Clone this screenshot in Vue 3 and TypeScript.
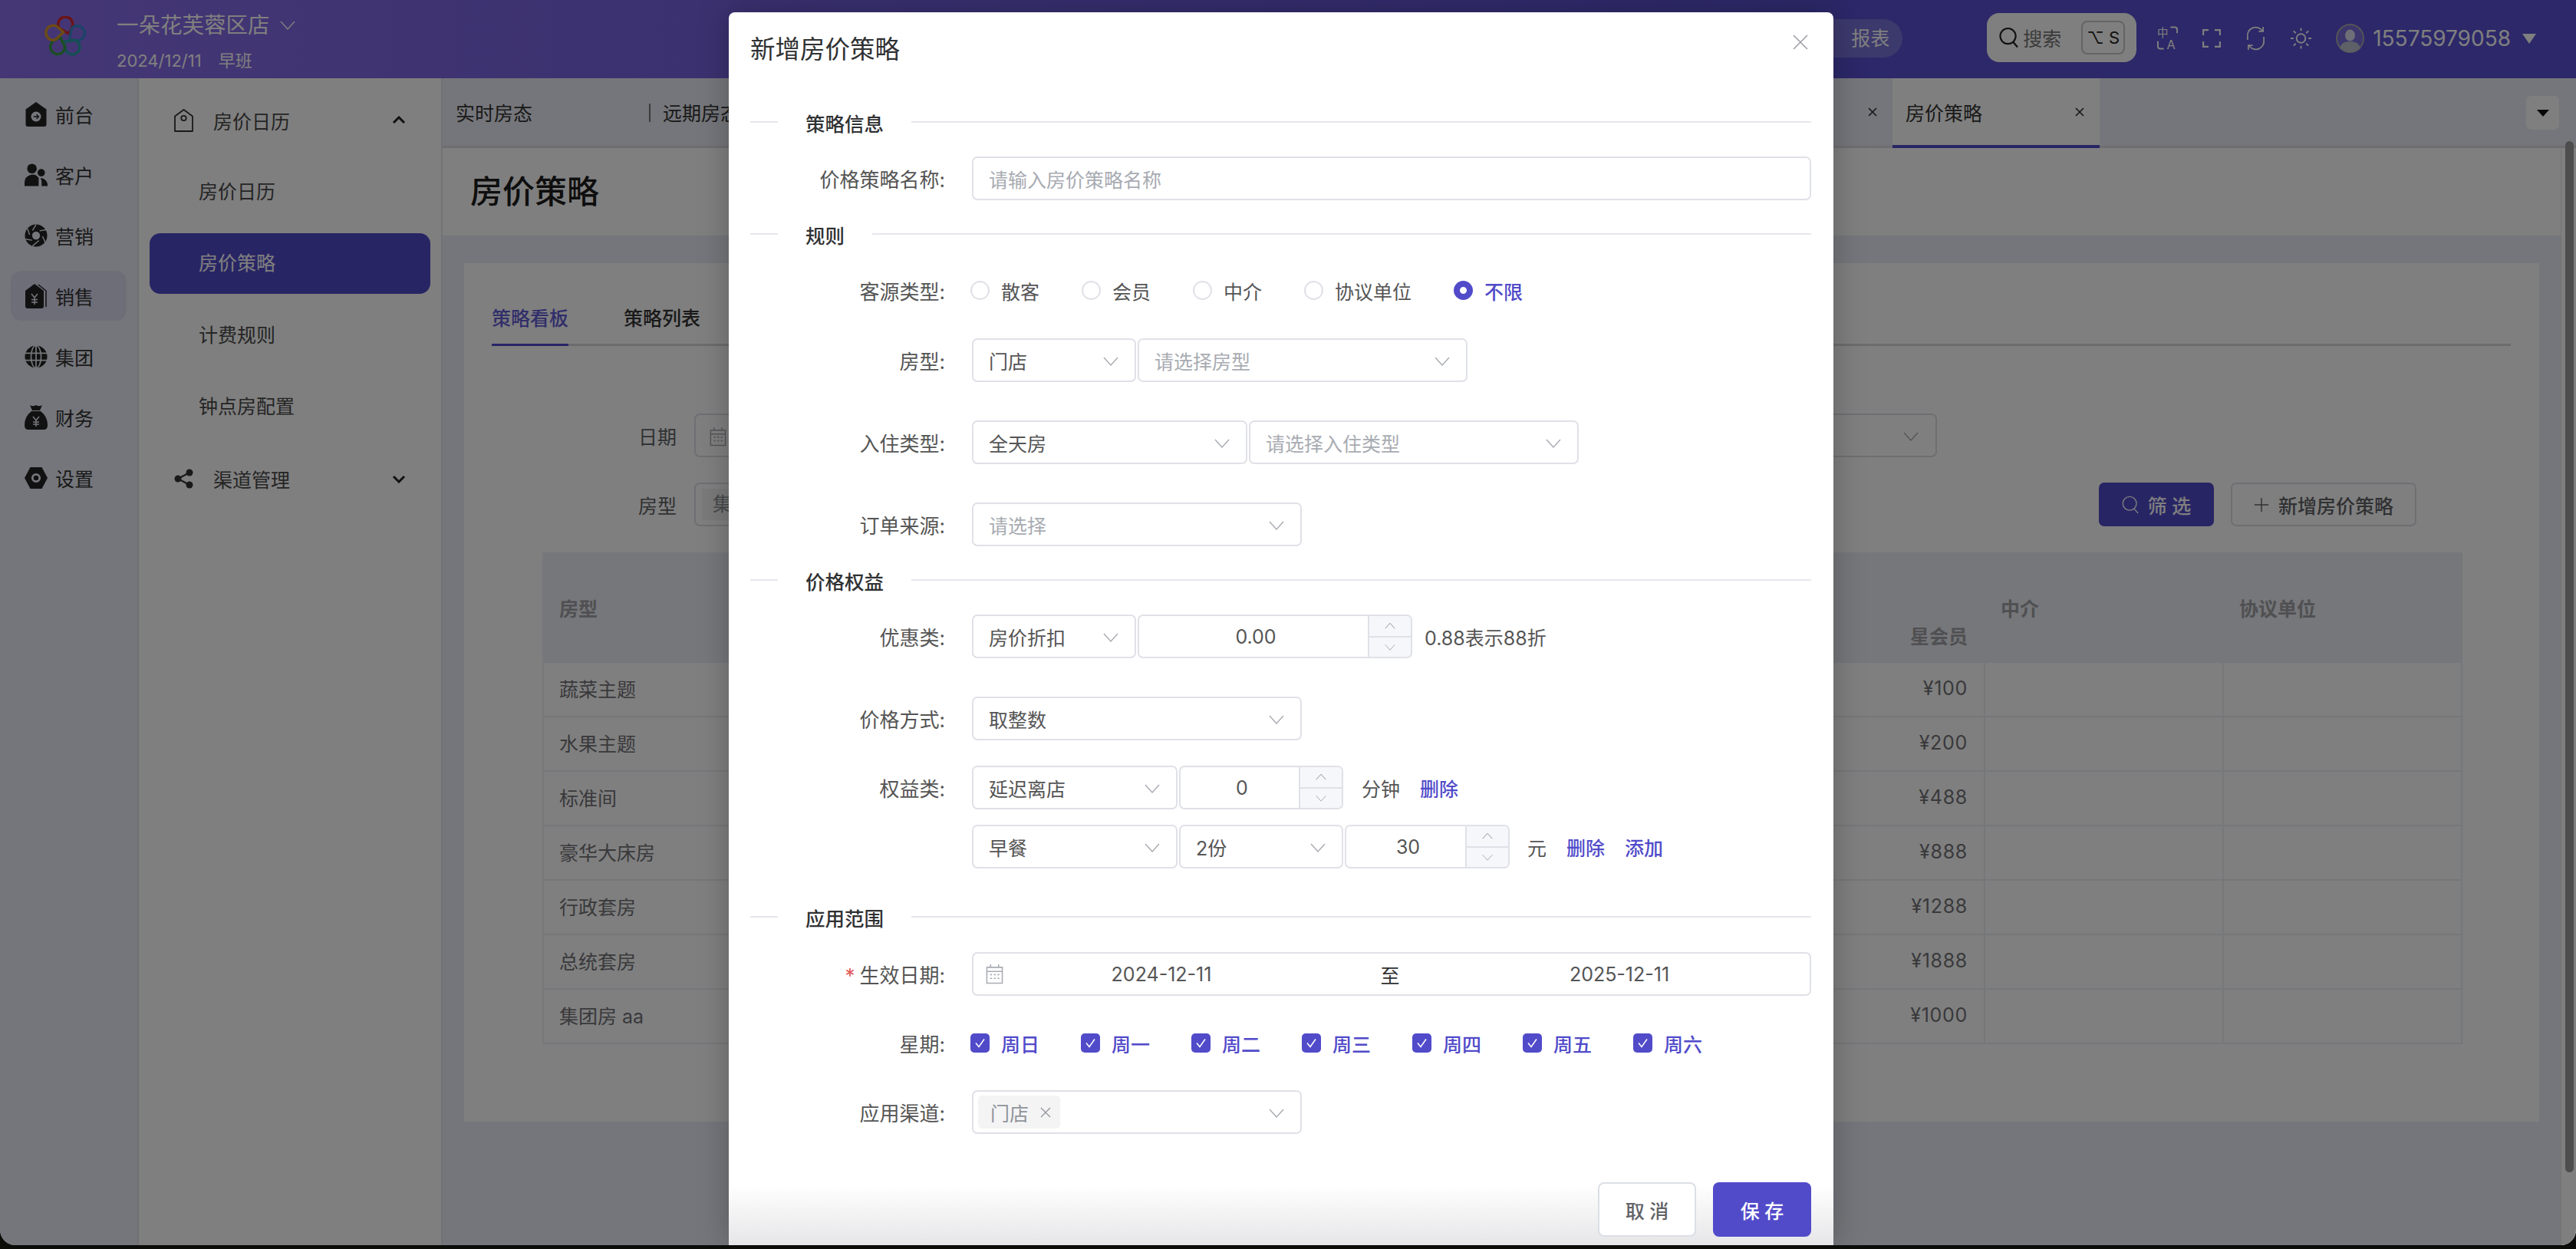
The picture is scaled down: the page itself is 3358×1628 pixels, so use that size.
<script setup lang="ts">
const rail = [
	{ name: "前台", icon: "i-front" },
	{ name: "客户", icon: "i-user" },
	{ name: "营销", icon: "i-market" },
	{ name: "销售", icon: "i-sale" },
	{ name: "集团", icon: "i-group" },
	{ name: "财务", icon: "i-money" },
	{ name: "设置", icon: "i-set" },
];
const subMenu = ["房价日历", "房价策略", "计费规则", "钟点房配置"];
// only the first two and the last two tabs are visible next to the modal
const tabs = ["实时房态", "远期房态", "", "", "", "", "", "房价策略"];
const rows = [
	["蔬菜主题", "¥100"],
	["水果主题", "¥200"],
	["标准间", "¥488"],
	["豪华大床房", "¥888"],
	["行政套房", "¥1288"],
	["总统套房", "¥1888"],
	["集团房 aa", "¥1000"],
];
const sources = ["散客", "会员", "中介", "协议单位", "不限"];
const weekdays = ["周日", "周一", "周二", "周三", "周四", "周五", "周六"];
const petals = ["#d9282a", "#3a86d0", "#2a9fa8", "#379a48", "#d8962c"];
</script>

<template>
	<svg class="sprite">
		<symbol id="chev" viewBox="0 0 20 12"><path d="M1 1l9 10 9-10" fill="none" stroke="currentColor" stroke-width="1.4" /></symbol>
		<symbol id="chev-up" viewBox="0 0 20 12"><path d="M1 11l9-10 9 10" fill="none" stroke="currentColor" stroke-width="1.4" /></symbol>
		<symbol id="cal" viewBox="0 0 24 28">
			<path d="M1.5 5h21v21.500h-21zM1.500 10.500h21M6.500 1v4M17.500 1v4" fill="none" stroke="currentColor" stroke-width="1.600" />
			<path d="M6 15h2.500M11 15h2.500M16 15h2.500M6 20h2.500M11 20h2.500M16 20h2.500" stroke="currentColor" stroke-width="1.800" />
		</symbol>
		<symbol id="i-front" viewBox="0 0 27 32">
			<path d="M13.500 0L27 9.500V29a3 3 0 0 1-3 3H3a3 3 0 0 1-3-3V9.500z" fill="currentColor" />
			<circle cx="13.500" cy="19" r="6.500" fill="#eceef6" />
			<path d="M10 19h7M14 16l3 3-3 3" fill="none" stroke="currentColor" stroke-width="1.300" />
		</symbol>
		<symbol id="i-user" viewBox="0 0 31 30">
			<circle cx="10" cy="6.500" r="6.500" fill="currentColor" />
			<circle cx="22.500" cy="12" r="5" fill="currentColor" />
			<path d="M0 30v-5a10.500 10.500 0 0 1 19-6v11zM21.500 19.500a9 9 0 0 1 9.500 8V30h-8v-5q0-3-1.500-5.500z" fill="currentColor" />
		</symbol>
		<symbol id="i-market" viewBox="0 0 32 32">
			<circle cx="16" cy="16" r="15.500" fill="currentColor" />
			<path d="M11 9L16 1M21 9.500L30 8M25 17L29 26M20 23L11 30.500M10.500 22.500L1.500 21M7 15L4 6" stroke="#eceef6" stroke-width="1.500" />
			<circle cx="16" cy="16" r="5.500" fill="#eceef6" />
		</symbol>
		<symbol id="i-sale" viewBox="0 0 28 32">
			<path d="M12 0L24 9V29a3 3 0 0 1-3 3H3a3 3 0 0 1-3-3V9z" fill="currentColor" />
			<path d="M17 1L27 9V30" fill="none" stroke="currentColor" stroke-width="1.500" />
			<path d="M8 13l4 5 4-5M12 18v9M8 20.500h8M8 24h8" fill="none" stroke="#eceef6" stroke-width="1.500" />
		</symbol>
		<symbol id="i-group" viewBox="0 0 32 32">
			<circle cx="16" cy="16" r="15.500" fill="currentColor" />
			<ellipse cx="16" cy="16" rx="7" ry="15.500" fill="none" stroke="#eceef6" stroke-width="1.800" />
			<path d="M16 0v32M0.500 11h31M0.500 21h31" stroke="#eceef6" stroke-width="1.800" />
		</symbol>
		<symbol id="i-money" viewBox="0 0 30 32">
			<path d="M7 0q4 2.500 8 0 4 2.500 8 0l-3 7h-10zM9 8h12q9 7 9 18 0 6-5 6H5q-5 0-5-6Q0 15 9 8z" fill="currentColor" />
			<path d="M11 15l4 5 4-5M15 20v8M11 22h8M11 25h8" fill="none" stroke="#eceef6" stroke-width="1.500" />
		</symbol>
		<symbol id="i-set" viewBox="0 0 32 30">
			<path d="M8 0h16l8 15-8 15H8L0 15z" fill="currentColor" />
			<circle cx="16" cy="15" r="5" fill="none" stroke="#eceef6" stroke-width="3" />
		</symbol>
		<symbol id="x" viewBox="0 0 12 12"><path d="M1 1l10 10M11 1L1 11" stroke="currentColor" stroke-width="1.700" /></symbol>
	</svg>

	<div class="app">
		<header class="topbar">
			<svg class="logo" viewBox="-27 -27 54 54">
				<g v-for="(c, i) in petals" :key="c" :transform="`rotate(${i * 72})`">
					<path d="M5 -4L-7.500 -11A9.500 9.500 0 1 1 8 -11Z" fill="none" :stroke="c" stroke-width="3.500" stroke-linejoin="round" />
				</g>
			</svg>
			<div class="brand">
				<div class="brand-name">一朵花芙蓉区店<svg class="brand-chev"><use href="#chev" /></svg></div>
				<div class="brand-date"><span>2024/12/11</span><span>早班</span></div>
			</div>
			<div class="top-right">
				<div class="report">报表</div>
				<div class="search">
					<svg class="search-icon" viewBox="0 0 26 28"><circle cx="12" cy="12" r="10.500" fill="none" stroke="currentColor" stroke-width="2.200" /><path d="M19 20l6 7" stroke="currentColor" stroke-width="2.400" /></svg>
					<span class="search-text">搜索</span>
					<span class="kbd">⌥ S</span>
				</div>
				<svg class="tool tool-lang" viewBox="0 0 28 34">
					<text x="0" y="15" font-size="15" fill="currentColor">中</text>
					<text x="13" y="32" font-size="17" fill="currentColor">A</text>
					<path d="M18 2h6q3 0 3 3v5M1 21v7q0 3 3 3h5" fill="none" stroke="currentColor" stroke-width="2" />
				</svg>
				<svg class="tool tool-full" viewBox="0 0 24 24"><path d="M1 8V1h7M16 1h7v7M23 16v7h-7M8 23H1v-7" fill="none" stroke="currentColor" stroke-width="2.400" /></svg>
				<svg class="tool tool-sync" viewBox="0 0 28 34"><path d="M3 19V15A11 11 0 0 1 23 7M25 15v4A11 11 0 0 1 5 27M18 7.500h6V1.500M10 26.500H4V32.500" fill="none" stroke="currentColor" stroke-width="1.800" /></svg>
				<svg class="tool tool-sun" viewBox="0 0 28 34">
					<circle cx="14" cy="17" r="6" fill="none" stroke="currentColor" stroke-width="2" />
					<path d="M14 3v4M14 27v4M0 17h4M24 17h4M4 7l3 3M21 24l3 3M24 7l-3 3M7 24l-3 3" stroke="currentColor" stroke-width="2" />
				</svg>
				<svg class="avatar" viewBox="0 0 37 38">
					<ellipse cx="18.500" cy="19" rx="17.500" ry="18" fill="rgba(255,255,255,.18)" stroke="#a8a8ae" stroke-width="2" />
					<ellipse cx="18.500" cy="15" rx="6.500" ry="7.500" fill="#dcdcf0" />
					<path d="M5 32q2-9 13.500-9T32 32q-6 5-13.500 5T5 32z" fill="#bcc0d0" />
				</svg>
				<span class="phone">15575979058</span>
				<i class="phone-caret"></i>
			</div>
		</header>

		<div class="body">
			<nav class="rail">
				<div v-for="item in rail" :key="item.name" class="rail-item" :class="{ active: item.name === '销售' }">
					<svg class="rail-icon"><use :href="`#${item.icon}`" /></svg>
					<span>{{ item.name }}</span>
				</div>
			</nav>

			<aside class="side">
				<div class="side-group">
					<svg class="side-icon" viewBox="0 0 25 30"><path d="M12.500 1L24 9.500V29H1V9.500z" fill="none" stroke="currentColor" stroke-width="1.800" stroke-linejoin="round" /><circle cx="12.500" cy="12" r="3.200" fill="none" stroke="currentColor" stroke-width="1.800" /></svg>
					<span>房价日历</span>
					<svg class="side-caret" viewBox="0 0 18 11"><path d="M2 9l7-7 7 7" fill="none" stroke="currentColor" stroke-width="3" /></svg>
				</div>
				<div v-for="sub in subMenu" :key="sub" class="side-item" :class="{ active: sub === '房价策略' }">{{ sub }}</div>
				<div class="side-group">
					<svg class="side-icon" viewBox="0 0 25 26"><path d="M20 5L5 13l15 8" fill="none" stroke="currentColor" stroke-width="2.200" /><circle cx="20" cy="5" r="4.500" fill="currentColor" /><circle cx="5" cy="13" r="4.500" fill="currentColor" /><circle cx="20" cy="21" r="4.500" fill="currentColor" /></svg>
					<span>渠道管理</span>
					<svg class="side-caret" viewBox="0 0 18 11"><path d="M2 2l7 7 7-7" fill="none" stroke="currentColor" stroke-width="3" /></svg>
				</div>
			</aside>

			<main class="main">
				<div class="tabs">
					<div v-for="(tab, i) in tabs" :key="i" class="tab" :class="{ active: i === 7 }">
						<span>{{ tab }}</span>
						<svg v-if="i > 0" class="tab-close"><use href="#x" /></svg>
					</div>
					<div class="tab-menu"><i></i></div>
				</div>
				<div class="scroll">
					<div class="page">
						<div class="page-head">房价策略</div>
						<section class="card">
							<div class="card-tabs">
								<span class="card-tab active">策略看板</span>
								<span class="card-tab">策略列表</span>
							</div>
							<div class="filter first">
								<label>日期</label>
								<div class="filter-box">
									<svg class="filter-cal"><use href="#cal" /></svg>
									<svg class="filter-chev"><use href="#chev" /></svg>
								</div>
							</div>
							<div class="filter">
								<label>房型</label>
								<div class="filter-box short"><span class="filter-tag">集</span></div>
								<button class="btn-filter">
									<svg viewBox="0 0 26 28"><circle cx="12" cy="12" r="10.500" fill="none" stroke="currentColor" stroke-width="1.600" /><path d="M19 20l6 7" stroke="currentColor" stroke-width="1.600" /></svg>
									筛 选
								</button>
								<button class="btn-add"><svg viewBox="0 0 22 22"><path d="M11 1v20M1 11h20" stroke="currentColor" stroke-width="1.600" /></svg>新增房价策略</button>
							</div>
							<table class="grid">
								<colgroup>
									<col class="c-room" />
									<col class="c-vip" />
									<col class="c-side" />
									<col class="c-side" />
								</colgroup>
								<thead>
									<tr>
										<th rowspan="2">房型</th>
										<th>会员价</th>
										<th rowspan="2">中介</th>
										<th rowspan="2">协议单位</th>
									</tr>
									<tr>
										<th class="right">星会员</th>
									</tr>
								</thead>
								<tbody>
									<tr v-for="row in rows" :key="row[0]">
										<td>{{ row[0] }}</td>
										<td class="right price">{{ row[1] }}</td>
										<td></td>
										<td></td>
									</tr>
								</tbody>
							</table>
						</section>
					</div>
					<div class="track"></div>
				</div>
			</main>
		</div>

		<div class="thumb"></div>

		<div class="mask">
			<div class="modal">
				<div class="modal-head">
					<span>新增房价策略</span>
					<svg class="modal-close" viewBox="0 0 20 20"><path d="M1 1l18 18M19 1L1 19" stroke="currentColor" stroke-width="1.500" /></svg>
				</div>
				<div class="modal-body">
					<div class="divider mt-43"><span>策略信息</span></div>
					<div class="row mt-27">
						<label>价格策略名称:</label>
						<div class="box full placeholder">请输入房价策略名称</div>
					</div>

					<div class="divider mt-26"><span>规则</span></div>
					<div class="row mt-27">
						<label>客源类型:</label>
						<div class="radios">
							<span v-for="s in sources" :key="s" class="radio" :class="{ on: s === '不限' }"><i></i>{{ s }}</span>
						</div>
					</div>
					<div class="row mt-34">
						<label>房型:</label>
						<div class="box w214">门店<svg class="chev"><use href="#chev" /></svg></div>
						<div class="box w430 placeholder ml-2">请选择房型<svg class="chev"><use href="#chev" /></svg></div>
					</div>
					<div class="row mt-50">
						<label>入住类型:</label>
						<div class="box w359">全天房<svg class="chev"><use href="#chev" /></svg></div>
						<div class="box w430 placeholder ml-2">请选择入住类型<svg class="chev"><use href="#chev" /></svg></div>
					</div>
					<div class="row mt-50">
						<label>订单来源:</label>
						<div class="box w430 placeholder">请选择<svg class="chev"><use href="#chev" /></svg></div>
					</div>

					<div class="divider mt-26"><span>价格权益</span></div>
					<div class="row mt-27">
						<label>优惠类:</label>
						<div class="box w214">房价折扣<svg class="chev"><use href="#chev" /></svg></div>
						<div class="box num w358 ml-2">
							<span class="num-value">0.00</span>
							<span class="spin"><svg><use href="#chev-up" /></svg><svg><use href="#chev" /></svg></span>
						</div>
						<span class="note ml-16">0.88表示88折</span>
					</div>
					<div class="row mt-50">
						<label>价格方式:</label>
						<div class="box w430">取整数<svg class="chev"><use href="#chev" /></svg></div>
					</div>
					<div class="row mt-33">
						<label>权益类:</label>
						<div class="box w268">延迟离店<svg class="chev"><use href="#chev" /></svg></div>
						<div class="box num w214 ml-2">
							<span class="num-value">0</span>
							<span class="spin"><svg><use href="#chev-up" /></svg><svg><use href="#chev" /></svg></span>
						</div>
						<span class="note ml-24">分钟</span>
						<a class="link ml-26">删除</a>
					</div>
					<div class="row mt-20">
						<label></label>
						<div class="box w268">早餐<svg class="chev"><use href="#chev" /></svg></div>
						<div class="box w214 ml-2">2份<svg class="chev"><use href="#chev" /></svg></div>
						<div class="box num w215 ml-2">
							<span class="num-value">30</span>
							<span class="spin"><svg><use href="#chev-up" /></svg><svg><use href="#chev" /></svg></span>
						</div>
						<span class="note ml-23">元</span>
						<a class="link ml-26">删除</a>
						<a class="link ml-26">添加</a>
					</div>

					<div class="divider mt-45"><span>应用范围</span></div>
					<div class="row mt-28">
						<label><i class="req">*</i>生效日期:</label>
						<div class="box full range">
							<svg class="cal"><use href="#cal" /></svg>
							<span>2024-12-11</span>
							<span class="range-sep">至</span>
							<span>2025-12-11</span>
						</div>
					</div>
					<div class="row mt-33">
						<label>星期:</label>
						<div class="checks">
							<span v-for="d in weekdays" :key="d" class="check">
								<i><svg viewBox="0 0 25 25"><path d="M7 12.500l4 5 7-10" fill="none" stroke="#fff" stroke-width="1.500" /></svg></i>{{ d }}
							</span>
						</div>
					</div>
					<div class="row mt-33">
						<label>应用渠道:</label>
						<div class="box w430 tagged">
							<span class="tag">门店<svg viewBox="0 0 14 14"><path d="M1 1l12 12M13 1L1 13" stroke="currentColor" stroke-width="1.300" /></svg></span>
							<svg class="chev"><use href="#chev" /></svg>
						</div>
					</div>
				</div>
				<div class="modal-foot">
					<button class="btn-cancel">取 消</button>
					<button class="btn-save">保 存</button>
				</div>
			</div>
		</div>
	</div>
</template>

<style>
html,
body {
	margin: 0;
	background: #0c0c08;
}
</style>

<style scoped>
* {
	box-sizing: border-box;
}

.sprite {
	display: none;
}

.app {
	position: relative;
	width: 3358px;
	height: 1623px;
	display: flex;
	flex-direction: column;
	overflow: hidden;
	border-radius: 0 0 20px 20px;
	background: #ebedf6;
	font-family: Inter, "Noto Sans CJK SC", sans-serif;
	font-size: 25px;
	color: #4a4a4a;
}

.topbar {
	height: 102px;
	flex-shrink: 0;
	display: flex;
	align-items: center;
	color: #fff;
	background: linear-gradient(90deg, #8a6eea 0%, #5850d2 72%);
}

.logo {
	width: 54px;
	height: 54px;
	margin-left: 58px;
	margin-bottom: 6px;
}

.brand {
	margin-left: 40px;
	margin-top: 6px;
}

.brand-name {
	font-size: 28.500px;
	line-height: 36px;
	display: flex;
	align-items: center;
}

.brand-chev {
	width: 22px;
	height: 12px;
	margin-left: 12px;
	color: #fff;
}

.brand-date {
	font-size: 22px;
	line-height: 28px;
	margin-top: 14px;
	display: flex;
	gap: 22px;
}

.top-right {
	margin-left: auto;
	padding-right: 52px;
	padding-bottom: 2px;
	display: flex;
	align-items: center;
}

.report {
	width: 120px;
	height: 50px;
	padding-left: 53px;
	line-height: 50px;
	border-radius: 0 25px 25px 0;
	background: rgba(255, 255, 255, 0.2);
}

.search {
	margin-left: 110px;
	margin-bottom: 2px;
	width: 195px;
	height: 64px;
	padding: 0 15px 0 16px;
	display: flex;
	align-items: center;
	border-radius: 16px;
	background: #fff;
	color: #777;
}

.search-icon {
	width: 25px;
	height: 28px;
	color: #222;
}

.search-text {
	margin-left: 6px;
	font-size: 25px;
}

.kbd {
	margin-left: auto;
	width: 57px;
	height: 44px;
	border: 2px solid #c8c8cc;
	border-radius: 8px;
	font-size: 22px;
	line-height: 40px;
	text-align: center;
	color: #222;
}

.tool {
	height: 28px;
	color: #fff;
}

.tool-lang {
	width: 27px;
	height: 34px;
	margin-left: 27px;
}

.tool-full {
	width: 24px;
	height: 24px;
	margin-left: 32px;
}

.tool-sync {
	width: 27px;
	height: 34px;
	margin-left: 32px;
}

.tool-sun {
	width: 27px;
	height: 34px;
	margin-left: 32px;
}

.avatar {
	width: 37px;
	height: 38px;
	margin-left: 32px;
}

.phone {
	margin-left: 11px;
	font-size: 28px;
}

.phone-caret {
	margin-left: 15px;
	width: 0;
	height: 0;
	border-left: 9px solid transparent;
	border-right: 9px solid transparent;
	border-top: 13px solid #fff;
}

.body {
	flex: 1;
	display: flex;
	min-height: 0;
}

.rail {
	width: 181px;
	flex-shrink: 0;
	padding: 14px 14px 0;
	border-right: 2px solid #dfe1ea;
	display: flex;
	flex-direction: column;
	gap: 14px;
	color: #333;
}

.rail-item {
	height: 65px;
	display: flex;
	align-items: center;
	padding-left: 18px;
	border-radius: 14px;
}

.rail-item.active {
	background: #dcdcf0;
}

.rail-icon {
	width: 30px;
	height: 32px;
	margin-right: 10px;
	color: #222;
}

.side {
	width: 396px;
	flex-shrink: 0;
	padding: 15px 14px 0;
	background: #fff;
	border-right: 2px solid #e4e5ec;
	display: flex;
	flex-direction: column;
	gap: 14.500px;
}

.side-group {
	height: 79px;
	padding-left: 32px;
	display: flex;
	align-items: center;
}

.side-icon {
	width: 25px;
	height: 30px;
	margin-right: 26px;
	color: #333;
}

.side-caret {
	width: 18px;
	height: 11px;
	margin-left: auto;
	margin-right: 32px;
	color: #222;
}

.side-item {
	height: 79px;
	line-height: 79px;
	padding-left: 64px;
	border-radius: 14px;
}

.side-item.active {
	background: #514bca;
	color: #fff;
}

.main {
	flex: 1;
	min-width: 0;
	display: flex;
	flex-direction: column;
}

.tabs {
	height: 91px;
	flex-shrink: 0;
	display: flex;
	align-items: stretch;
	border-bottom: 3px solid #dcdde3;
	color: #333;
}

.tab {
	position: relative;
	width: 270px;
	padding: 0 17px;
	display: flex;
	align-items: center;
	justify-content: space-between;
}

.tab + .tab::before {
	content: "";
	position: absolute;
	left: -1px;
	top: 33px;
	height: 24px;
	border-left: 2px solid #777;
}

.tab.active {
	background: #fff;
	border-bottom: 4px solid #514bca;
	height: 91px;
}

.tab.active::before {
	display: none;
}

.tab-close {
	width: 12px;
	height: 12px;
	margin-right: 3px;
}

.tab-menu {
	margin: 23px 22px 0 auto;
	width: 43px;
	height: 44px;
	border-radius: 7px;
	background: #fff;
	display: flex;
	align-items: center;
	justify-content: center;
}

.tab-menu i {
	width: 0;
	height: 0;
	border-left: 8px solid transparent;
	border-right: 8px solid transparent;
	border-top: 9px solid #111;
}

.scroll {
	flex: 1;
	display: flex;
	min-height: 0;
}

.page {
	flex: 1;
	min-width: 0;
}

.track {
	width: 20px;
	background: #fff;
	border-left: 1px solid #e8e8ea;
}

.thumb {
	position: absolute;
	left: 3344px;
	top: 184px;
	width: 11px;
	height: 1344px;
	border-radius: 6px;
	background: #9a9a9a;
}

.page-head {
	height: 114px;
	padding-left: 36px;
	background: #fff;
	font-size: 42px;
	font-weight: 500;
	line-height: 114px;
	color: #1c1c1c;
}

.card {
	margin: 36px 28px 0;
	height: 1119px;
	padding: 36px 0 0 36px;
	background: #fff;
}

.card-tabs {
	width: 2632px;
	height: 72px;
	display: flex;
	gap: 72px;
	border-bottom: 3px solid #d9d9de;
}

.card-tab {
	height: 72px;
	line-height: 72px;
	font-weight: 500;
	color: #333;
}

.card-tab.active {
	color: #625cd4;
	border-bottom: 3px solid #514bca;
}

.filter {
	width: 2368px;
	height: 57px;
	margin-top: 33px;
	margin-left: 141px;
	display: flex;
	align-items: center;
}

.filter.first {
	margin-top: 88px;
}

.filter label {
	width: 100px;
	margin-right: 23px;
	text-align: right;
	color: #606266;
}

.filter-box {
	position: relative;
	width: 1620px;
	height: 57px;
	border: 2px solid #dcdfe6;
	border-radius: 7px;
}

.filter-box.short {
	width: 1000px;
}

.filter-cal {
	position: absolute;
	left: 18px;
	top: 15px;
	width: 22px;
	height: 26px;
	color: #a8abb2;
}

.filter-chev {
	position: absolute;
	right: 22px;
	top: 22px;
	width: 20px;
	height: 12px;
	color: #a8abb2;
}

.filter-tag {
	position: absolute;
	left: 8px;
	top: 6px;
	height: 41px;
	padding: 0 14px;
	line-height: 41px;
	background: #f4f4f5;
	color: #909399;
}

.btn-filter,
.btn-add {
	height: 57px;
	border-radius: 7px;
	font: inherit;
	font-weight: 500;
	display: flex;
	align-items: center;
	justify-content: center;
}

.btn-filter {
	width: 150px;
	margin-left: auto;
	border: 0;
	background: #514bca;
	color: #fff;
	gap: 12px;
}

.btn-filter svg {
	width: 22px;
	height: 26px;
}

.btn-add {
	width: 242px;
	margin-left: 22px;
	border: 2px solid #dcdfe6;
	background: #fff;
	color: #606266;
	gap: 12px;
}

.btn-add svg {
	width: 20px;
	height: 20px;
}

.grid {
	width: 2501px;
	margin: 34px 0 0 66px;
	table-layout: fixed;
	border-collapse: collapse;
	color: #737377;
}

.c-room {
	width: 600px;
}

.c-vip {
	width: 1279px;
}

.c-side {
	width: 311px;
}

.grid th,
.grid td {
	border: 2px solid #ebeef5;
	padding: 0 21px 0 20px;
	text-align: left;
}

.grid th {
	height: 71px;
	background: #eceef5;
	font-weight: 600;
	color: #a0a0a4;
}

.grid td {
	height: 71px;
	padding-bottom: 3px;
}

.grid .right {
	text-align: right;
}

.grid .price {
	letter-spacing: 0.700px;
}

.modal .divider,
.modal label {
	white-space: nowrap;
}

.mask {
	position: absolute;
	inset: 0;
	background: rgba(0, 0, 0, 0.5);
}

.modal {
	position: absolute;
	left: 950px;
	top: 16px;
	bottom: 0;
	width: 1440px;
	display: flex;
	flex-direction: column;
	background: #fff;
	border-radius: 8px 8px 0 0;
	box-shadow: 0 0 40px rgba(0, 0, 0, 0.25);
	color: #555;
}

.modal-head {
	position: relative;
	height: 82px;
	padding: 28px 0 0 28px;
	font-size: 32.500px;
	line-height: 42px;
	color: #303133;
}

.modal-close {
	position: absolute;
	right: 33px;
	top: 29px;
	width: 20px;
	height: 20px;
	color: #9a9ca3;
}

.modal-body {
	padding: 0 29px 0 28px;
}

.divider {
	height: 36px;
	display: flex;
	align-items: center;
	font-weight: 500;
	font-size: 25.500px;
	color: #303133;
}

.divider::before {
	content: "";
	width: 36px;
	border-top: 2px solid #e6e6ec;
}

.divider::after {
	content: "";
	flex: 1;
	border-top: 2px solid #e6e6ec;
}

.divider span {
	padding: 0 36px;
}

.row {
	height: 57px;
	display: flex;
	align-items: center;
}

.row label {
	width: 254px;
	margin-right: 35px;
	flex-shrink: 0;
	text-align: right;
	font-size: 26px;
}

.req {
	color: #e05a5a;
	font-style: normal;
	margin-right: 6px;
}

.box {
	position: relative;
	height: 57px;
	padding-left: 20px;
	display: flex;
	align-items: center;
	border: 2px solid #e0e1e8;
	border-radius: 7px;
	background: #fff;
}

.placeholder {
	color: #a8abb2;
}

.full {
	flex: 1;
}

.w214 {
	width: 214px;
}

.w215 {
	width: 215px;
}

.w268 {
	width: 268px;
}

.w358 {
	width: 358px;
}

.w359 {
	width: 359px;
}

.w430 {
	width: 430px;
}

.chev {
	position: absolute;
	right: 21px;
	top: 22px;
	width: 20px;
	height: 12px;
	color: #a8abb2;
}

.num {
	padding: 0 50px 0 0;
	justify-content: center;
}

.spin {
	position: absolute;
	right: 0;
	top: 0;
	bottom: 0;
	width: 56px;
	display: flex;
	flex-direction: column;
	background: #f5f7fa;
	border-left: 2px solid #e0e1e8;
	border-radius: 0 6px 6px 0;
}

.spin svg {
	flex: 1;
	width: 100%;
	height: 8px;
	padding: 0 20px;
	color: #8f9299;
}

.spin svg + svg {
	border-top: 2px solid #e0e1e8;
	color: #a8abb2;
}

.note {
	white-space: nowrap;
}

.link {
	color: #514bca;
	font-weight: 500;
	white-space: nowrap;
}

.mt-20 {
	margin-top: 20px;
}

.mt-26 {
	margin-top: 26px;
}

.mt-27 {
	margin-top: 27px;
}

.mt-28 {
	margin-top: 28px;
}

.mt-33 {
	margin-top: 33px;
}

.mt-34 {
	margin-top: 34px;
}

.mt-43 {
	margin-top: 43px;
}

.mt-45 {
	margin-top: 45px;
}

.mt-50 {
	margin-top: 50px;
}

.ml-2 {
	margin-left: 2px;
}

.ml-16 {
	margin-left: 16px;
}

.ml-23 {
	margin-left: 23px;
}

.ml-24 {
	margin-left: 24px;
}

.ml-26 {
	margin-left: 26px;
}

.radios,
.checks {
	display: flex;
	margin-left: -2px;
}

.radio {
	display: flex;
	align-items: center;
	margin-right: 55px;
	white-space: nowrap;
}

.radio i {
	width: 25px;
	height: 25px;
	margin-right: 15px;
	border-radius: 50%;
	border: 2px solid #e0e1e8;
}

.radio.on {
	color: #514bca;
	font-weight: 500;
}

.radio.on i {
	border: 8px solid #514bca;
	background: #fff;
}

.check {
	width: 144px;
	display: flex;
	align-items: center;
	color: #514bca;
	font-weight: 500;
}

.check i {
	width: 25px;
	height: 25px;
	margin-right: 15px;
	border-radius: 5px;
	background: #514bca;
	display: flex;
}

.range {
	display: grid;
	grid-template-columns: 23px 412px 184px 1fr;
	align-items: center;
	padding: 0 41px 0 16px;
	text-align: center;
}

.cal {
	width: 23px;
	height: 27px;
	color: #a8abb2;
}

.range-sep {
	color: #303133;
}

.tagged {
	padding-left: 6px;
}

.tag {
	height: 43px;
	width: 107px;
	padding-left: 16px;
	display: flex;
	align-items: center;
	gap: 15px;
	background: #f4f4f5;
	border-radius: 5px;
	color: #909399;
}

.tag svg {
	width: 14px;
	height: 14px;
}

.modal-foot {
	margin-top: auto;
	height: 93px;
	padding: 11px 29px 0 0;
	display: flex;
	justify-content: flex-end;
	gap: 22px;
	background: linear-gradient(180deg, #fff 0%, #fff 15%, #e6e6e8 100%);
}

.modal-foot button {
	width: 128px;
	height: 71px;
	border-radius: 8px;
	font: inherit;
	font-weight: 500;
}

.btn-cancel {
	border: 2px solid #dcdfe6;
	background: #fff;
	color: #606266;
}

.btn-save {
	border: 0;
	background: #514bca;
	color: #fff;
}
</style>
